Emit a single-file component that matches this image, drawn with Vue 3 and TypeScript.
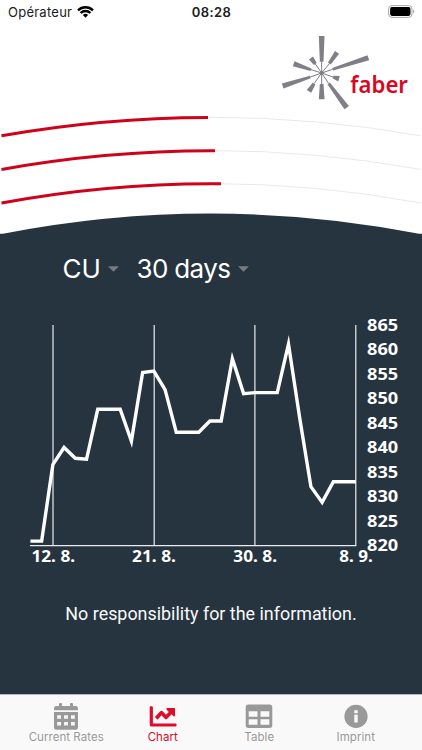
<script setup lang="ts">
interface Arc {
  start: number
  peak: number
  end: number
}

const CENTER = 211
const HALF = 209.5

const arcs: Arc[] = [
  { start: 135.7, peak: 117.4, end: 208 },
  { start: 169.4, peak: 150.7, end: 215 },
  { start: 203, peak: 183.7, end: 221 },
]

function arcPath(arc: Arc, toX: number): string {
  const sag = arc.start - arc.peak
  const r = (HALF * HALF + sag * sag) / (2 * sag)
  const y = (x: number) => arc.peak + r - Math.sqrt(r * r - (x - CENTER) ** 2)
  const x0 = CENTER - HALF
  return `M${x0} ${y(x0)}A${r} ${r} 0 0 1 ${toX} ${y(toX)}`
}

/* Spokes of the logo: inner point, outer point, inner and outer width */
const spokes: number[][] = [
  [149, 95, 149, 18, 11, 17],
  [172, 101, 195, 67, 10, 15],
  [182, 118, 289, 83, 8, 16],
  [183, 141, 201, 146, 8, 17],
  [170, 160, 224, 233, 9, 17],
  [149, 162, 149, 208, 11, 17],
  [126, 161, 111, 184, 10, 16],
  [115, 141, 32, 168, 8, 16],
  [117, 119, 65, 101, 8, 16],
  [130, 102, 117, 84, 10, 15],
]

function spokePoints([x1, y1, x2, y2, a, b]: number[]): string {
  const len = Math.hypot(x2 - x1, y2 - y1)
  const nx = -(y2 - y1) / len / 2
  const ny = (x2 - x1) / len / 2
  return [
    [x1 + nx * a, y1 + ny * a],
    [x2 + nx * b, y2 + ny * b],
    [x2 - nx * b, y2 - ny * b],
    [x1 - nx * a, y1 - ny * a],
  ]
    .map((p) => p.join(','))
    .join(' ')
}

const STEP = 11.22
const RIGHT = 355.8
const rates: number[] = [
  820.9, 820.9, 836.5, 840, 837.8, 837.6, 847.8, 847.8, 847.8, 841.3,
  855.3, 855.6, 851.8, 843.1, 843.1, 843.1, 845.4, 845.4, 858.1, 851,
  851.2, 851.2, 851.2, 861.1, 846, 832, 828.8, 833, 833, 833,
]
const scaleY = (v: number) => 545.5 - (v - 820) * 4.9
const line = rates
  .map((v, i) => `${(RIGHT - (rates.length - 1 - i) * STEP).toFixed(2)},${scaleY(v).toFixed(2)}`)
  .join(' ')

const levels = [865, 860, 855, 850, 845, 840, 835, 830, 825, 820]
const dates = [
  { text: '12. 8.', x: 31.5, w: 43.5, grid: 53 },
  { text: '21. 8.', x: 132, w: 44, grid: 154.2 },
  { text: '30. 8.', x: 233.3, w: 43.8, grid: 254.9 },
  { text: '8. 9.', x: 339.3, w: 33.5, grid: 355.8 },
]
</script>

<template>
  <div class="screen">
    <header class="status">
      <div class="carrier">
        <span class="operator">Opérateur</span>
        <svg class="wifi" viewBox="0 0 17 12">
          <path d="M1 4.4a10.6 10.6 0 0 1 15 0M3.6 7a6.9 6.9 0 0 1 9.8 0" />
          <path class="solid" d="M8.5 11.8 5.9 9.1a3.7 3.7 0 0 1 5.2 0z" />
        </svg>
      </div>
      <span class="time">08:28</span>
      <div class="power">
        <svg class="battery" viewBox="0 0 27 13">
          <rect x=".6" y=".6" width="23.4" height="11.8" rx="3.4" class="shell" />
          <rect x="2.1" y="2.1" width="20.4" height="8.8" rx="1.8" />
          <path d="M25.2 4.5c1.6.5 1.6 3.5 0 4z" class="cap" />
        </svg>
      </div>
    </header>

    <div class="brand">
      <svg class="logo" viewBox="0 0 450 246">
        <g class="spokes">
          <template v-for="(s, i) in spokes" :key="i">
            <line x1="149" y1="129" :x2="s[0]" :y2="s[1]" />
            <polygon :points="spokePoints(s)" />
          </template>
          <circle cx="149" cy="129" r="5" />
        </g>
        <text x="235" y="188" textLength="173" lengthAdjust="spacingAndGlyphs">faber</text>
      </svg>
    </div>

    <svg class="arcs" viewBox="0 112 422 128">
      <path v-for="a in arcs" :key="'t' + a.peak" :d="arcPath(a, 420.5)" class="track" />
      <path v-for="a in arcs" :key="'p' + a.peak" :d="arcPath(a, a.end)" class="progress" />
      <path d="M0 233.8H3A1090 1090 0 0 1 419 233.8H422V240H0Z" class="hill" />
    </svg>

    <main class="content">
      <div class="filters">
        <button class="select metal">CU</button>
        <svg class="caret" viewBox="0 0 12 6"><path d="M0 0h12L6 6z" /></svg>
        <button class="select range">30 days</button>
        <svg class="caret" viewBox="0 0 12 6"><path d="M0 0h12L6 6z" /></svg>
      </div>

      <svg class="chart" viewBox="0 310 422 260">
        <g class="grid">
          <line v-for="d in dates" :key="d.text" :x1="d.grid" :x2="d.grid" y1="325" y2="545.5" />
          <line x1="30" x2="356.3" y1="545.6" y2="545.6" />
        </g>
        <polyline :points="line" class="series" />
        <text
          v-for="(l, i) in levels"
          :key="l"
          x="367"
          :y="330.6 + i * 24.5"
          textLength="31.2"
          lengthAdjust="spacingAndGlyphs"
        >{{ l }}</text>
        <text
          v-for="d in dates"
          :key="d.text"
          :x="d.x"
          y="561.6"
          :textLength="d.w"
          lengthAdjust="spacingAndGlyphs"
        >{{ d.text }}</text>
      </svg>

      <p class="notice">No responsibility for the information.</p>
    </main>

    <nav class="tabs">
      <a class="tab">
        <svg viewBox="0 0 28 28">
          <path fill-rule="evenodd" d="M2 8.2V6.5Q2 4 4.500 4H7V2Q7 1 8 1h1q1 0 1 1v2h8V2q0-1 1-1h1q1 0 1 1v2h2.500Q26 4 26 6.500V8.200zM2 10H26V25.300Q26 27.800 23.500 27.800H4.500Q2 27.800 2 25.300zM5.200 13.300v3.400h3.800v-3.400zm6.900 0v3.400h3.800v-3.400zm6.900 0v3.400h3.800v-3.400zM5.200 20v3.500h3.800V20zm6.900 0v3.500h3.800V20zm6.900 0v3.500h3.800V20z" />
        </svg>
        <span class="label rates">Current Rates</span>
      </a>
      <a class="tab active">
        <svg viewBox="0 0 28 28">
          <path d="M1.300 4.200H2.700Q3.900 4.200 3.900 5.400V21.400H26.500Q27.600 21.400 27.600 22.500V23.300Q27.600 24.400 26.500 24.400H2.300Q.7 24.400 .7 22.800V5.400Q.7 4.200 1.300 4.200z" />
          <path d="M18 6H25.200Q26 6 26 6.800V13.800Q25.500 15.200 24.500 14.200L22.600 12.300 18.200 16.700Q17 17.900 15.800 16.700L12.500 13.300 9 17.200Q8.500 17.700 8 17.200L6.300 15.500Q5.800 15 6.300 14.500L11.300 9.300Q12.500 8.200 13.700 9.300L17 12.700 19.800 9.900 17.500 7.600Q16.900 6.300 18 6z" />
        </svg>
        <span class="label">Chart</span>
      </a>
      <a class="tab">
        <svg viewBox="0 0 28 28">
          <path fill-rule="evenodd" d="M3.500 2.600H24.500Q27.300 2.600 27.300 5.200V23.300Q27.300 25.900 24.500 25.900H3.500Q.7 25.900 .7 23.300V5.200Q.7 2.600 3.500 2.600zM3.700 9.300v5.400h8.800V9.300zm11.800 0v5.400h8.800V9.300zM3.700 17.300v5.400h8.800v-5.400zm11.800 0v5.400h8.800v-5.400z" />
        </svg>
        <span class="label">Table</span>
      </a>
      <a class="tab">
        <svg viewBox="0 0 28 28">
          <circle cx="14" cy="14.400" r="11.600" />
          <path class="cut" d="M12.300 8.200h3.400v3h-3.400zM12.300 12.800h3.400v7.600h-3.400z" />
        </svg>
        <span class="label">Imprint</span>
      </a>
    </nav>
  </div>
</template>

<style>
body {
  margin: 0;
  overflow: hidden;
}
</style>

<style scoped>
.screen {
  display: flex;
  flex-direction: column;
  width: 422px;
  height: 750px;
  background: #fff;
  font-family: Inter, sans-serif;
}
.status {
  display: grid;
  grid-template-columns: 1fr auto 1fr;
  align-items: center;
  height: 24px;
  padding: 0 7px 0 8px;
  color: #202020;
}
.carrier {
  display: flex;
  align-items: center;
  gap: 5px;
}
.operator {
  font-size: 13px;
  letter-spacing: 0.25px;
}
.wifi {
  width: 17px;
  height: 12px;
  fill: none;
  stroke: #000;
  stroke-width: 2.4;
}
.wifi .solid {
  fill: #000;
  stroke: none;
}
.time {
  font-size: 13px;
  font-weight: 600;
  letter-spacing: 0.4px;
}
.power {
  display: flex;
  justify-content: flex-end;
}
.battery {
  width: 27px;
  height: 13px;
  margin-top: -1px;
}
.battery .shell {
  fill: none;
  stroke: #a8a8a8;
  stroke-width: 1;
}
.battery .cap {
  fill: #a0a0a0;
}
.brand {
  display: flex;
  justify-content: flex-end;
  height: 82px;
  padding-top: 6px;
}
.logo {
  width: 150px;
  height: 82px;
}
.spokes {
  fill: #807e87;
  stroke: #807e87;
  stroke-width: 3;
}
.spokes polygon {
  stroke: none;
}
.logo text {
  fill: #dc0521;
  font: 600 68px 'Noto Sans', sans-serif;
}
.arcs {
  display: block;
  width: 422px;
  height: 128px;
}
.track,
.progress {
  fill: none;
}
.track {
  stroke: #e9e9e9;
  stroke-width: 1;
}
.progress {
  stroke: #d0021b;
  stroke-width: 3;
}
.hill {
  fill: #263440;
}
.content {
  flex: 1;
  background: #263440;
  color: #fff;
}
.filters {
  display: flex;
  align-items: center;
  height: 58px;
  padding-left: 62.5px;
}
.select {
  padding: 0;
  border: 0;
  background: none;
  color: #fff;
  font: 400 26px/32px Inter, sans-serif;
  text-align: left;
  white-space: nowrap;
}
.metal {
  width: 45px;
}
.range {
  width: 101px;
  margin-left: 18px;
  letter-spacing: -0.65px;
}
.caret {
  width: 11px;
  height: 6px;
  fill: #777b80;
}
.chart {
  display: block;
  width: 422px;
  height: 260px;
  margin-top: 12px;
}
.grid line {
  stroke: #e9ecee;
  stroke-width: 1.2;
}
.series {
  fill: none;
  stroke: #fff;
  stroke-width: 3.4;
  stroke-linejoin: miter;
  stroke-miterlimit: 10;
}
.chart text {
  fill: #fff;
  font: 700 16.3px 'Noto Sans', sans-serif;
}
.notice {
  margin: 32px 0 0;
  color: #f8f9fa;
  font: 400 17.9px/24px Roboto, sans-serif;
  text-align: center;
}
.tabs {
  display: flex;
  box-sizing: border-box;
  height: 56px;
  padding: 6.5px 18px 0;
  border-top: 1px solid #b5b9bc;
  background: #f9f9f9;
}
.tab {
  display: flex;
  flex: 1;
  flex-direction: column;
  align-items: center;
  color: #999;
}
.tab svg {
  width: 28px;
  height: 28px;
  fill: currentColor;
}
.tab .cut {
  fill: #f9f9f9;
}
.active {
  color: #df0b2b;
}
.label {
  font-size: 11.5px;
  line-height: 15px;
  letter-spacing: 0.05px;
  white-space: nowrap;
}
</style>
